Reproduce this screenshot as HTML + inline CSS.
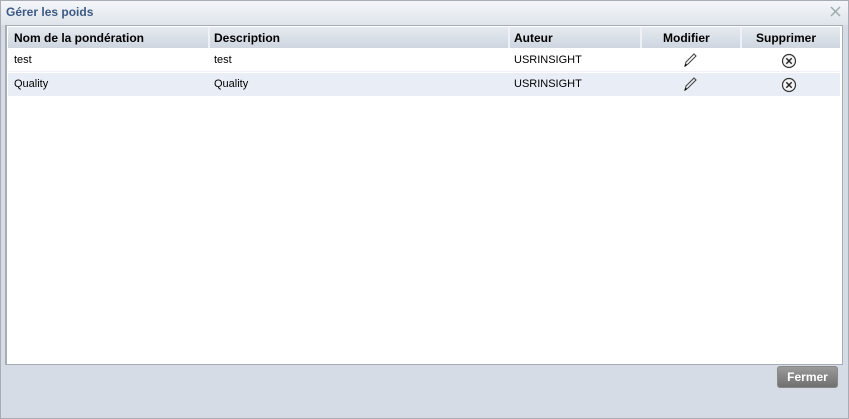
<!DOCTYPE html>
<html><head><meta charset="utf-8"><style>
*{margin:0;padding:0;box-sizing:border-box}
body{width:849px;height:419px;overflow:hidden;background:#d5dce5;font-family:Tahoma,"Liberation Sans","DejaVu Sans",sans-serif;position:relative}
.win{position:absolute;left:0;top:0;width:849px;height:419px;border:1px solid #a8adb5;background:#d5dce5}
.title{position:absolute;left:0;top:0;width:847px;height:24px;background:linear-gradient(#f4f6f9,#dfe4eb)}
.title span{position:absolute;left:5px;top:4px;font-size:12px;font-weight:bold;color:#3c5a84}
.close{position:absolute;left:829px;top:5px}
.grid{position:absolute;left:4px;top:24px;width:838px;height:340px;border:1px solid #a8adb5;border-left:2px solid #a8adb5;background:#fff}
.hdr{position:absolute;left:1px;top:1px;width:832px;height:21px;background:linear-gradient(#e6eaf0,#cfd6e0)}
.c{position:absolute;font-size:12px;font-weight:bold;color:#000;top:4px}
.sep{position:absolute;top:0;width:2px;height:21px;background:#eef1f5}
.row{position:absolute;left:1px;width:832px;height:23px;font-size:11px;color:#000}
.row span{position:absolute;top:5px}
</style></head><body>
<div class="win">
<div class="title"><span>Gérer les poids</span>
<svg class="close" width="11" height="11" viewBox="0 0 11 11"><path d="M1 1L10 10M10 1L1 10" stroke="#9aa" stroke-width="1.4"/></svg></div>
<div class="grid">
<div class="hdr">
<span class="c" style="left:6px">Nom de la pondération</span>
<div class="sep" style="left:200px"></div>
<span class="c" style="left:206px">Description</span>
<div class="sep" style="left:500px"></div>
<span class="c" style="left:506px">Auteur</span>
<div class="sep" style="left:632px"></div>
<span class="c" style="left:655px">Modifier</span>
<div class="sep" style="left:732px"></div>
<span class="c" style="left:748px">Supprimer</span>
</div>
<div class="row" style="top:23px;background:#fff;border-bottom:1px solid #eef1f5"><span style="left:6px">test</span><span style="left:206px">test</span><span style="left:506px">USRINSIGHT</span>
<svg style="position:absolute;left:674px;top:3px" width="16" height="16" viewBox="0 0 16 16"><path d="M3 14L4 10L12 2L14 4L6 12Z" fill="none" stroke="#444" stroke-width="1.1"/><path d="M3 14L4.5 12.5" stroke="#000" stroke-width="1.5"/></svg>
<svg style="position:absolute;left:773px;top:4px" width="16" height="16" viewBox="0 0 16 16"><circle cx="8" cy="8" r="6.5" fill="#f4f4f4" stroke="#333" stroke-width="1.2"/><path d="M5.3 5.3L10.7 10.7M10.7 5.3L5.3 10.7" stroke="#222" stroke-width="1.4"/></svg></div>
<div class="row" style="top:47px;background:#e9eef6"><span style="left:6px">Quality</span><span style="left:206px">Quality</span><span style="left:506px">USRINSIGHT</span>
<svg style="position:absolute;left:674px;top:3px" width="16" height="16" viewBox="0 0 16 16"><path d="M3 14L4 10L12 2L14 4L6 12Z" fill="none" stroke="#444" stroke-width="1.1"/><path d="M3 14L4.5 12.5" stroke="#000" stroke-width="1.5"/></svg>
<svg style="position:absolute;left:773px;top:4px" width="16" height="16" viewBox="0 0 16 16"><circle cx="8" cy="8" r="6.5" fill="#f4f4f4" stroke="#333" stroke-width="1.2"/><path d="M5.3 5.3L10.7 10.7M10.7 5.3L5.3 10.7" stroke="#222" stroke-width="1.4"/></svg></div>
</div>
<div style="position:absolute;left:776px;top:365px;width:61px;height:22px;border-radius:3px;background:linear-gradient(#9a9a9a,#707070);border:1px solid #888;color:#fff;font-size:12px;font-weight:bold;text-align:center;line-height:20px">Fermer</div>
</div>
</body></html>
